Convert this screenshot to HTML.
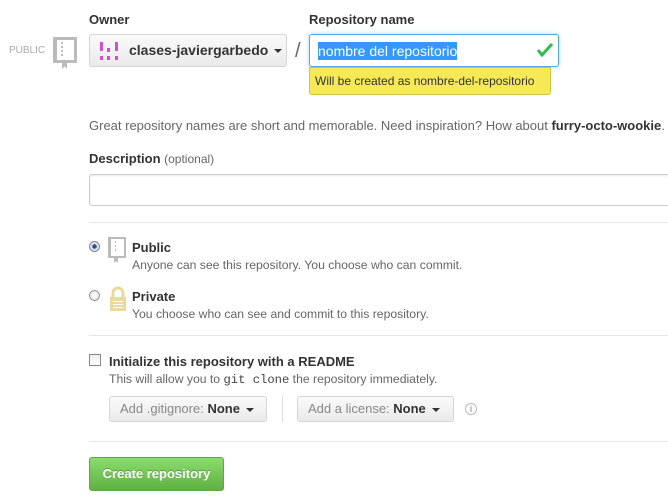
<!DOCTYPE html>
<html><head><style>
body{margin:0;width:668px;height:501px;background:#fff;font-family:"Liberation Sans",sans-serif;color:#333;position:relative;overflow:hidden}
.a{position:absolute}
.lbl{font-weight:bold;font-size:13px;color:#333}
.btn{position:absolute;border:1px solid #d5d5d5;border-radius:3px;background:linear-gradient(#fafafa,#eaeaea);box-sizing:border-box}
.caret{display:inline-block;width:0;height:0;border-left:4px solid transparent;border-right:4px solid transparent;border-top:4px solid #333;vertical-align:middle;margin-left:6px}
.hr{position:absolute;left:89px;right:0;height:1px;background:#e5e5e5}
.gray{color:#666;font-size:12.2px}
</style></head><body>
<div class="a lbl" style="left:89px;top:12px">Owner</div>
<div class="a lbl" style="left:309px;top:12px">Repository name</div>
<div class="a" style="left:9px;top:45px;font-size:10px;color:#aaa">PUBLIC</div>
<svg class="a" style="left:53px;top:37px" width="25" height="32" viewBox="0 0 25 32"><path d="M0 0h24v26H14v6l-2.5-2.5L9 32v-6H0z" fill="#bbb"/><rect x="4" y="3" width="17" height="20" fill="#fff"/><g fill="#bbb"><rect x="8" y="5" width="2" height="2"/><rect x="8" y="9" width="2" height="2"/><rect x="8" y="13" width="2" height="2"/><rect x="8" y="17" width="2" height="2"/></g></svg>
<div class="btn" style="left:89px;top:34px;width:198px;height:33px"></div>
<svg class="a" style="left:100px;top:42px" width="18" height="18"><g fill="#d24fcf"><rect x="0" y="0" width="3" height="9"/><rect x="0" y="14" width="3" height="4"/><rect x="7" y="6" width="3" height="4"/><rect x="15" y="0" width="3" height="9"/><rect x="15" y="14" width="3" height="4"/><rect x="7" y="14" width="3" height="4"/></g></svg>
<div class="a" style="left:129px;top:42px;font-size:14px;font-weight:bold;color:#333">clases-javiergarbedo<span class="caret"></span></div>
<div class="a" style="left:295px;top:40px;font-size:20px;color:#666">/</div>
<div class="a" style="left:309px;top:34px;width:250px;height:33px;box-sizing:border-box;border:1px solid #51a7e8;border-radius:3px;box-shadow:0 0 4px rgba(81,167,232,.5);background:#fff"></div>
<div class="a" style="left:318px;top:42px;height:18px;background:#3399ff;color:#fff;font-size:14px;line-height:18px">nombre del repositorio</div>
<svg class="a" style="left:537px;top:43px" width="16" height="14"><path d="M1 7l4 5L15 1" stroke="#2cbe4e" stroke-width="3" fill="none"/></svg>
<div class="a" style="left:309px;top:67px;width:242px;height:28px;box-sizing:border-box;background:#f5e956;border:1px solid #d3c537;border-radius:0 0 3px 3px;font-size:12px;line-height:26px;padding-left:5px;color:#333;white-space:nowrap">Will be created as nombre-del-repositorio</div>
<div class="a" style="left:89px;top:118px;font-size:13px;color:#666;white-space:nowrap">Great repository names are short and memorable. Need inspiration? How about <b style="color:#333">furry-octo-wookie</b>.</div>
<div class="a lbl" style="left:89px;top:151px">Description <span style="font-weight:normal;font-size:12px;color:#666">(optional)</span></div>
<div class="a" style="left:89px;top:174px;width:600px;height:32px;box-sizing:border-box;border:1px solid #ccc;border-radius:3px;box-shadow:inset 0 1px 2px rgba(0,0,0,.08)"></div>
<div class="hr" style="top:222px"></div>
<div class="a" style="left:89px;top:241px;width:11px;height:11px;border-radius:50%;border:1px solid #888;box-sizing:border-box;background:radial-gradient(#2a4f8a 30%,#cfe0f5 40%,#eee)"></div>
<svg class="a" style="left:108px;top:237px" width="19" height="26"><path d="M0 0h18v21H10v5l-2-2-2 2v-5H0z" fill="#bbb"/><rect x="3" y="2" width="13" height="17" fill="#fff"/><g fill="#bbb"><rect x="7" y="4" width="1" height="2"/><rect x="7" y="8" width="1" height="2"/><rect x="7" y="12" width="1" height="2"/></g></svg>
<div class="a lbl" style="left:132px;top:240px">Public</div>
<div class="a gray" style="left:132px;top:258px">Anyone can see this repository. You choose who can commit.</div>
<div class="a" style="left:89px;top:290px;width:11px;height:11px;border-radius:50%;border:1px solid #999;box-sizing:border-box;background:radial-gradient(#fff,#ddd)"></div>
<svg class="a" style="left:108px;top:286px" width="20" height="26"><path d="M5 11V7a5 5 0 0110 0v4" stroke="#e9d99b" stroke-width="3" fill="none"/><rect x="2" y="11" width="16" height="14" fill="#e9d99b"/><g fill="#fff"><rect x="5" y="15" width="10" height="1"/><rect x="5" y="18" width="10" height="1"/><rect x="5" y="21" width="10" height="1"/></g></svg>
<div class="a lbl" style="left:132px;top:289px">Private</div>
<div class="a gray" style="left:132px;top:307px">You choose who can see and commit to this repository.</div>
<div class="hr" style="top:335px"></div>
<div class="a" style="left:89px;top:354px;width:12px;height:12px;border:1px solid #888;box-sizing:border-box;background:linear-gradient(#eee,#fff)"></div>
<div class="a lbl" style="left:109px;top:354px">Initialize this repository with a README</div>
<div class="a gray" style="left:109px;top:372px">This will allow you to <span style="font-family:'Liberation Mono',monospace;color:#444">git clone</span> the repository immediately.</div>
<div class="btn" style="left:109px;top:396px;width:158px;height:26px;font-size:13px;line-height:24px;padding-left:10px;color:#888">Add .gitignore: <b style="color:#333">None</b><span class="caret"></span></div>
<div class="a" style="left:282px;top:396px;width:1px;height:26px;background:#ddd"></div>
<div class="btn" style="left:297px;top:396px;width:157px;height:26px;font-size:13px;line-height:24px;padding-left:10px;color:#888">Add a license: <b style="color:#333">None</b><span class="caret"></span></div>
<div class="a" style="left:465px;top:403px;width:12px;height:12px;border-radius:50%;border:1px solid #bbb;box-sizing:border-box;font-size:9px;line-height:10px;text-align:center;color:#aaa;font-weight:bold">i</div>
<div class="hr" style="top:441px"></div>
<div class="a" style="left:89px;top:457px;width:135px;height:34px;box-sizing:border-box;border:1px solid #5ca941;border-radius:3px;background:linear-gradient(#8add6d,#60b044);color:#fff;font-weight:bold;font-size:13px;line-height:32px;text-align:center;text-shadow:0 -1px 0 rgba(0,0,0,.25)">Create repository</div>
</body></html>
